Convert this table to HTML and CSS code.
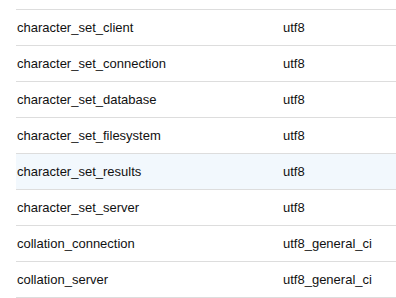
FILE: index.html
```html
<!doctype html>
<html lang="en">
<head>
    <meta charset="UTF-8">
    <title>Variables</title>
    <link rel="stylesheet" href="styles.css">
</head>
<body>
    <table class="vars">
        <tr><td class="name">character_set_client</td><td>utf8</td></tr>
        <tr><td class="name">character_set_connection</td><td>utf8</td></tr>
        <tr><td class="name">character_set_database</td><td>utf8</td></tr>
        <tr><td class="name">character_set_filesystem</td><td>utf8</td></tr>
        <tr class="hover"><td class="name">character_set_results</td><td>utf8</td></tr>
        <tr><td class="name">character_set_server</td><td>utf8</td></tr>
        <tr><td class="name">collation_connection</td><td>utf8_general_ci</td></tr>
        <tr><td class="name">collation_server</td><td>utf8_general_ci</td></tr>
    </table>
</body>
</html>
```

FILE: styles.css
```css
body {
    margin: 0;
    padding-top: 9px;
    background-color: #ffffff;
    font-family: "Liberation Sans", Arial, sans-serif;
    font-size: 13px;
    color: #111111;
}

.vars {
    margin-left: 16px;
    width: 380px;
    border-collapse: collapse;
}

.vars td {
    border-top: 1px solid #dddddd;
    border-bottom: 1px solid #dddddd;
    height: 35px;
    padding: 0 0 0 1px;
    vertical-align: middle;
}

.vars td.name {
    width: 265px;
}

.vars tr.hover td {
    background-color: #f2f8fd;
}
```
